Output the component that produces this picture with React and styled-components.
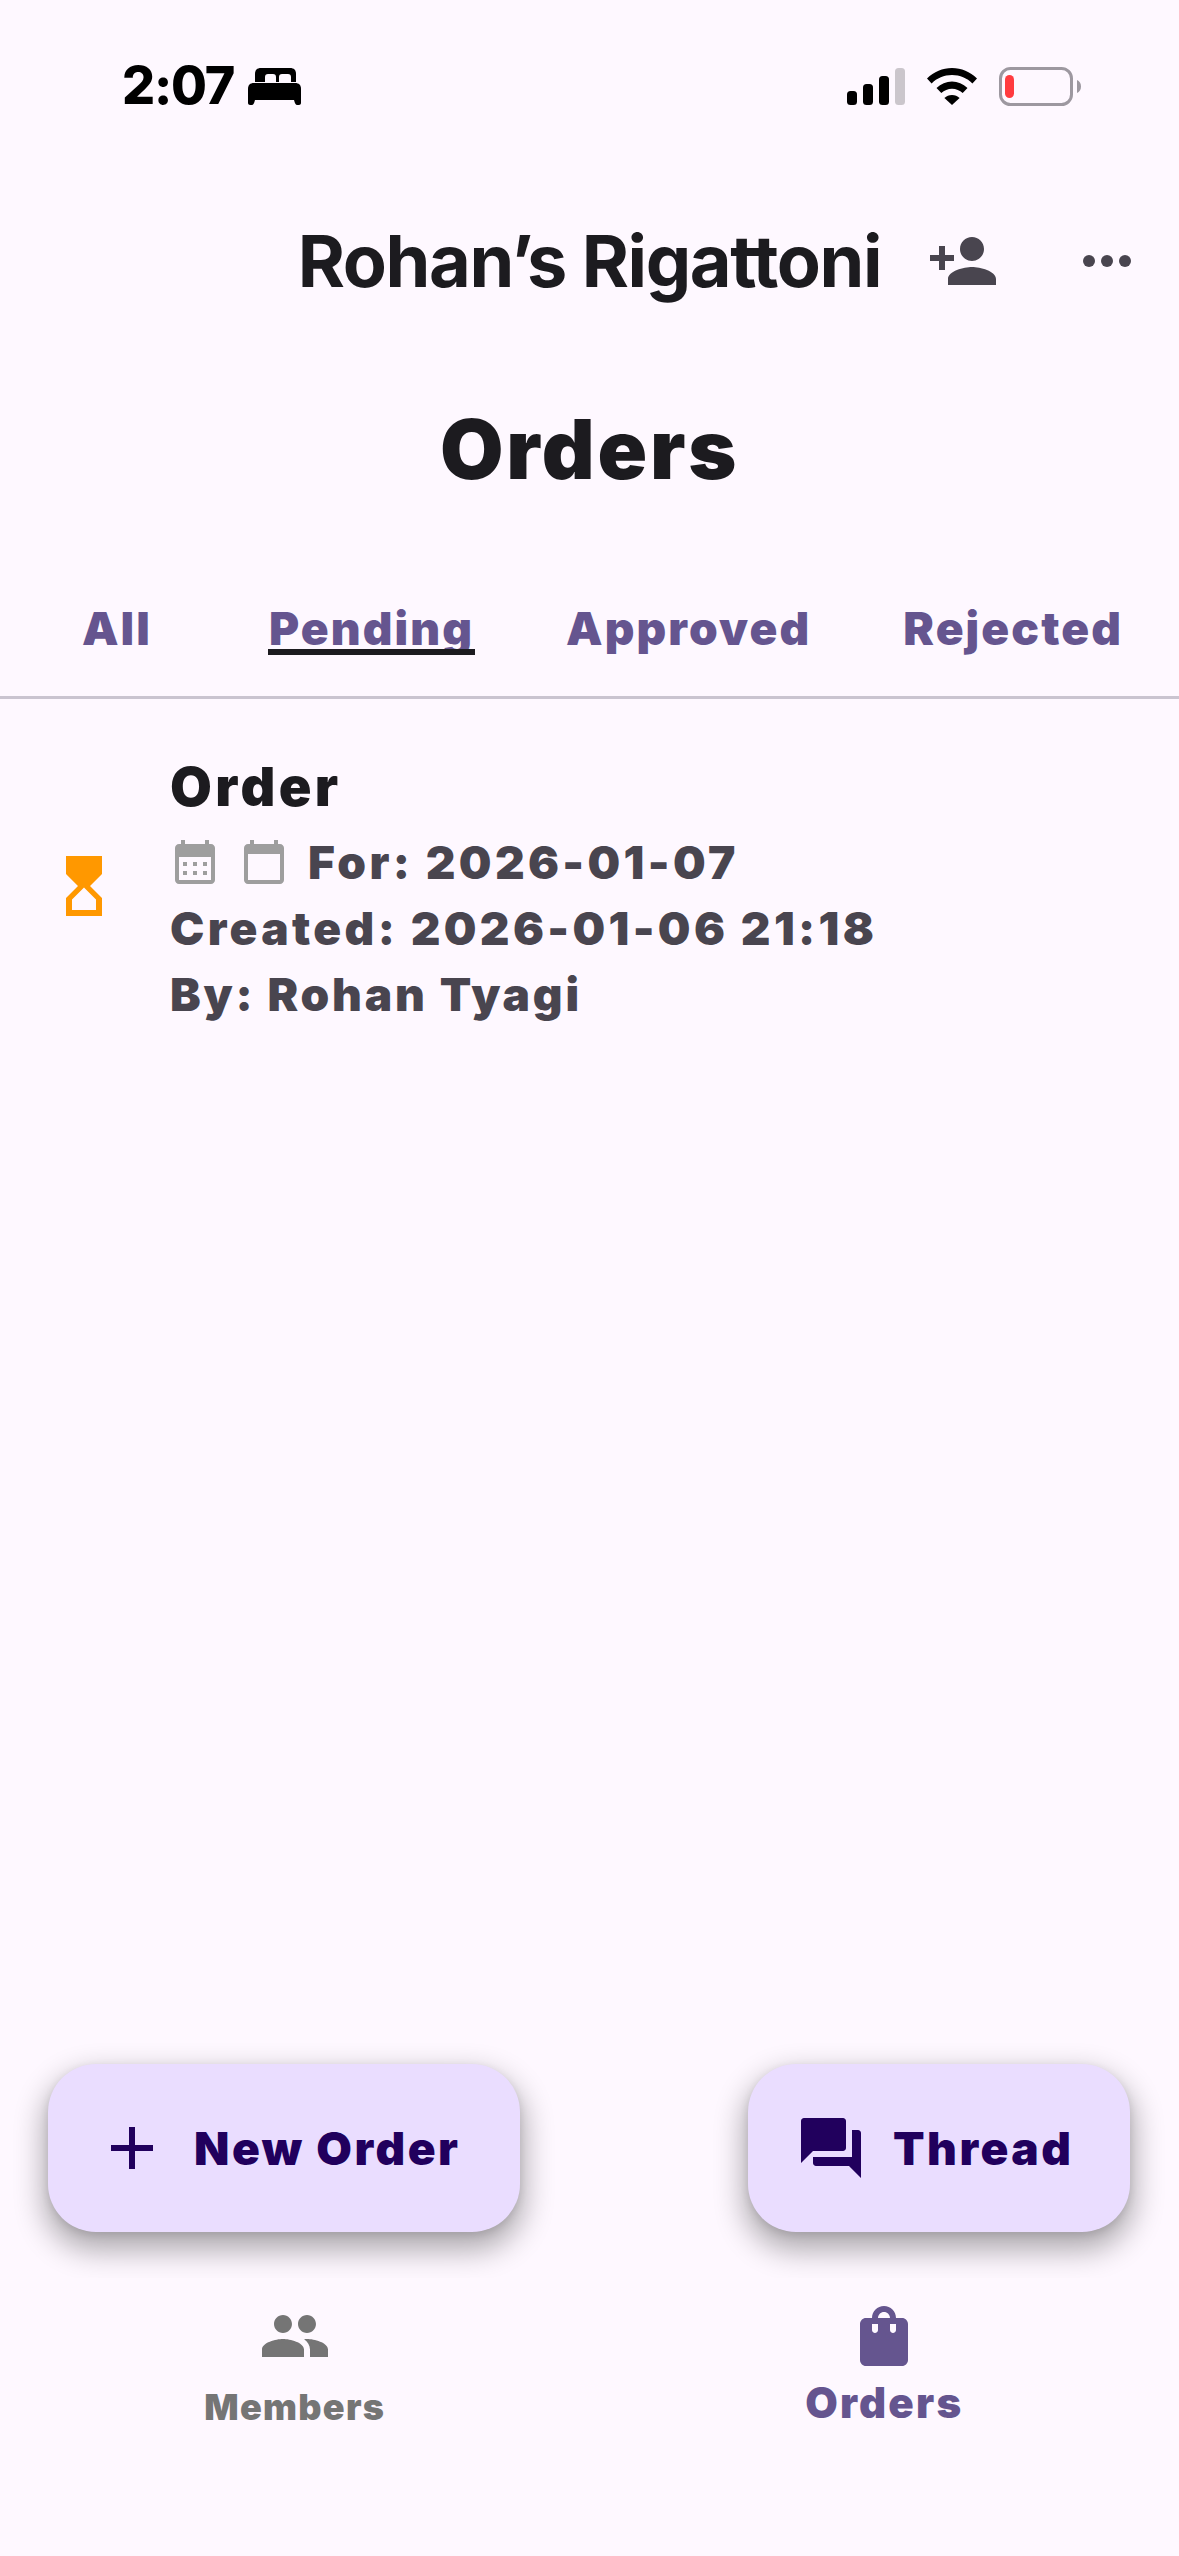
import React from 'react';
import styled, { createGlobalStyle } from 'styled-components';

const GlobalStyle = createGlobalStyle`
  html, body {
    margin: 0;
    padding: 0;
    background: #fef8ff;
    font-family: Inter, "Noto Sans", sans-serif;
  }
`;

const Page = styled.div`
  width: 1179px;
  height: 2556px;
  overflow: hidden;
  display: flex;
  flex-direction: column;
  background: #fef8ff;
  color: #1c1b1f;
`;

const StatusBar = styled.div`
  height: 225px;
  box-sizing: border-box;
  padding: 56px 98px 0 122px;
  display: flex;
  justify-content: space-between;
  align-items: flex-start;
`;
const StatusLeft = styled.div`
  display: flex;
  align-items: center;
  gap: 14px;
`;
const Clock = styled.span`
  font-size: 52px;
  line-height: 60px;
  font-weight: 800;
  color: #000;
  letter-spacing: -1.2px;
`;
const StatusRight = styled.div`
  display: flex;
  align-items: center;
  gap: 22px;
  margin-top: 11px;
`;

const AppBar = styled.header`
  height: 72px;
  display: grid;
  grid-template-columns: 1fr auto 1fr;
  align-items: center;
`;
const AppTitle = styled.h1`
  grid-column: 2;
  margin: 0;
  font-size: 72px;
  line-height: 72px;
  font-weight: 700;
  letter-spacing: -1.4px;
  white-space: nowrap;
`;
const AppActions = styled.div`
  grid-column: 3;
  padding-right: 36px;
  display: flex;
  justify-content: flex-end;
  gap: 72px;
`;

const Heading = styled.h2`
  margin: 105px 0 0;
  text-align: center;
  font-size: 82px;
  line-height: 96px;
  font-weight: 900;
  letter-spacing: 2.7px;
`;

const Tabs = styled.nav`
  height: 201px;
  box-sizing: border-box;
  padding: 100px 0 0 11px;
  display: flex;
  align-items: flex-start;
  border-bottom: 3px solid #cac4d0;
`;
const Tab = styled.div`
  box-sizing: border-box;
  min-width: ${p => p.$minWidth || 0}px;
  padding: 0 46px;
  text-align: center;
  font-size: 46px;
  line-height: 60px;
  font-weight: 900;
  letter-spacing: 2.1px;
  color: #65558f;
  white-space: nowrap;
`;
const ActiveLabel = styled.span`
  position: relative;
  display: inline-block;
  &::after {
    content: '';
    position: absolute;
    left: -1px;
    right: -1px;
    bottom: 3px;
    height: 6px;
    background: #1c1b1f;
  }
`;

const OrderList = styled.main`
  flex: 1;
  min-height: 0;
`;
const OrderRow = styled.div`
  padding: 55px 48px 0;
  display: flex;
  align-items: center;
  gap: 50px;
`;
const StatusIcon = styled.span`
  margin-bottom: 10px;
`;
const OrderBody = styled.div`
  display: flex;
  flex-direction: column;
`;
const OrderName = styled.div`
  font-size: 54px;
  line-height: 66px;
  margin-bottom: 9px;
  font-weight: 900;
  letter-spacing: 3.4px;
`;
const OrderLine = styled.div`
  display: flex;
  align-items: center;
  font-size: 46px;
  line-height: 66px;
  font-weight: 900;
  letter-spacing: ${p => p.$spacing || 3.35}px;
  color: #49454f;
  white-space: nowrap;
`;
const CalendarGroup = styled.span`
  display: flex;
  gap: 21px;
  margin: 0 20px 0 1px;
`;

const FabRow = styled.div`
  padding: 0 49px 46px 48px;
  display: flex;
  justify-content: space-between;
`;
const Fab = styled.button`
  height: 168px;
  width: ${p => p.$width}px;
  box-sizing: border-box;
  padding: 0 0 0 ${p => p.$inset}px;
  border: 0;
  border-radius: 48px;
  background: #eaddff;
  color: #21005d;
  box-shadow: 0 14px 30px 4px rgba(0, 0, 0, 0.32), 0 3px 9px rgba(0, 0, 0, 0.1);
  display: flex;
  align-items: center;
  gap: ${p => p.$gap}px;
  font-family: inherit;
  font-size: 46px;
  font-weight: 900;
  letter-spacing: 2.5px;
  white-space: nowrap;
`;

const BottomNav = styled.nav`
  height: 278px;
  box-sizing: border-box;
  background: #fef8ff;
  display: grid;
  grid-template-columns: 1fr 1fr;
`;
const NavItem = styled.div`
  display: flex;
  flex-direction: column;
  align-items: center;
  padding-top: 22px;
  color: ${p => (p.$active ? '#65558f' : '#757575')};
`;
const NavLabel = styled.span`
  font-size: ${p => (p.$active ? 42 : 36)}px;
  line-height: 48px;
  font-weight: 900;
  letter-spacing: ${p => (p.$active ? 2.2 : 1.3)}px;
  margin-top: ${p => (p.$active ? 7 : 11)}px;
`;

const Icon = ({ d, size = 72, color = 'currentColor' }) => (
  <svg width={size} height={size} viewBox="0 0 24 24" fill={color} style={{ display: 'block', flex: 'none' }}>
    <path d={d} />
  </svg>
);

const PATHS = {
  personAdd:
    'M15 12c2.21 0 4-1.79 4-4s-1.79-4-4-4-4 1.79-4 4 1.79 4 4 4zm-9-2V7H4v3H1v2h3v3h2v-3h3v-2H6zm9 4c-2.67 0-8 1.34-8 4v2h16v-2c0-2.66-5.33-4-8-4z',
  hourglass:
    'M6 2v6h.01L6 8.01 10 12l-4 4 .01.01H6V22h12v-5.99h-.01L18 16l-4-4 4-3.99-.01-.01H18V2H6zm10 14.5V20H8v-3.5l4-4 4 4z',
  calendarToday:
    'M20 3h-1V1h-2v2H7V1H5v2H4c-1.1 0-2 .9-2 2v16c0 1.1.9 2 2 2h16c1.1 0 2-.9 2-2V5c0-1.1-.9-2-2-2zm0 18H4V8h16v13z',
  calendarDots:
    'M20 3h-1V1h-2v2H7V1H5v2H4c-1.1 0-2 .9-2 2v16c0 1.1.9 2 2 2h16c1.1 0 2-.9 2-2V5c0-1.1-.9-2-2-2zm0 18H4V9.500h16V21zM6 12h2v2H6zm5 0h2v2h-2zm5 0h2v2h-2zM6 16.500h2v2H6zm5 0h2v2h-2zm5 0h2v2h-2z',
  add: 'M19 13h-6v6h-2v-6H5v-2h6V5h2v6h6v2z',
  forum:
    'M21 6h-2v9H6v2c0 .55.45 1 1 1h11l4 4V7c0-.55-.45-1-1-1zm-4 6V3c0-.55-.45-1-1-1H3c-.55 0-1 .45-1 1v14l4-4h10c.55 0 1-.45 1-1z',
  people:
    'M16 11c1.66 0 2.99-1.34 2.99-3S17.66 5 16 5c-1.66 0-3 1.34-3 3s1.34 3 3 3zm-8 0c1.66 0 2.99-1.34 2.99-3S9.66 5 8 5C6.34 5 5 6.34 5 8s1.34 3 3 3zm0 2c-2.33 0-7 1.17-7 3.5V19h14v-2.5c0-2.33-4.67-3.5-7-3.5zm8 0c-.29 0-.62.02-.97.05 1.16.84 1.97 1.97 1.97 3.45V19h6v-2.5c0-2.33-4.67-3.5-7-3.5z',
  bag:
    'M18 6h-2c0-2.21-1.79-4-4-4S8 3.79 8 6H6c-1.1 0-2 .9-2 2v12c0 1.1.9 2 2 2h12c1.1 0 2-.9 2-2V8c0-1.1-.9-2-2-2zm-8 4c0 .55-.45 1-1 1s-1-.45-1-1V8h2v2zm2-6c1.1 0 2 .9 2 2h-4c0-1.1.9-2 2-2zm4 6c0 .55-.45 1-1 1s-1-.45-1-1V8h2v2z',
};

const MoreIcon = () => (
  <svg width="72" height="72" viewBox="0 0 24 24" fill="#49454f" style={{ display: 'block' }}>
    <circle cx="6" cy="12" r="2" />
    <circle cx="12" cy="12" r="2" />
    <circle cx="18" cy="12" r="2" />
  </svg>
);

const BedIcon = () => (
  <svg width="53" height="37" viewBox="0 0 53 37" fill="#000" style={{ display: 'block' }}>
    <path d="M7 14V6c0-4 2-6 6-6h29c4 0 6 2 6 6v8h-5V9c0-2-1-3-3-3h-6c-2 0-3 1-3 3v5h-3V9c0-2-1-3-3-3h-5c-2 0-3 1-3 3v5z" />
    <path d="M6 15h41c4 0 6 2 6 6v14c0 1-1 2-2 2h-2c-1 0-2-1-3-5H7c-1 4-2 5-3 5H2c-1 0-2-1-2-2V21c0-4 2-6 6-6z" />
  </svg>
);

const SignalIcon = () => (
  <svg width="58" height="37" viewBox="0 0 58 37" style={{ display: 'block' }}>
    <rect x="0" y="23" width="10" height="14" rx="3.5" fill="#000" />
    <rect x="16" y="16" width="10" height="21" rx="3.5" fill="#000" />
    <rect x="32" y="8" width="10" height="29" rx="3.5" fill="#000" />
    <rect x="48" y="0" width="10" height="37" rx="3.5" fill="#cbc6cc" />
  </svg>
);

const WifiIcon = () => (
  <svg width="50" height="37" viewBox="0 0 50 37" fill="#000" style={{ display: 'block' }}>
    <path d="M25 0c9.5 0 18 3.6 25 10.5l-4.6 5C40 10 33 7 25 7S10 10 4.6 15.500L0 10.500C7 3.600 15.500 0 25 0z" />
    <path d="M25 13.500c5.800 0 11 2.200 15.500 6.500l-4.800 5C32.800 22.300 29 20.700 25 20.700s-7.800 1.600-10.700 4.300l-4.800-5C14 15.700 19.200 13.500 25 13.500z" />
    <path d="M25 27c3 0 5.500 1 7.600 3L25 37l-7.600-7c2.100-2 4.600-3 7.600-3z" />
  </svg>
);

const BatteryIcon = () => (
  <svg width="82" height="39" viewBox="0 0 82 39" style={{ display: 'block' }}>
    <rect x="1.500" y="1.500" width="71" height="36" rx="10" fill="none" stroke="#9d98a0" strokeWidth="3" />
    <rect x="6" y="8" width="9" height="23" rx="4.500" fill="#ff3b3f" />
    <path d="M78 13c2.500 1 4 3.500 4 6.500s-1.500 5.500-4 6.500z" fill="#9d98a0" />
  </svg>
);

const tabs = [
  { label: 'All', minWidth: 212 },
  { label: 'Pending', active: true },
  { label: 'Approved' },
  { label: 'Rejected' },
];

export default function App() {
  return (
    <Page>
      <GlobalStyle />
      <StatusBar>
        <StatusLeft>
          <Clock>2:07</Clock>
          <BedIcon />
        </StatusLeft>
        <StatusRight>
          <SignalIcon />
          <WifiIcon />
          <BatteryIcon />
        </StatusRight>
      </StatusBar>

      <AppBar>
        <AppTitle>Rohan’s Rigattoni</AppTitle>
        <AppActions>
          <Icon d={PATHS.personAdd} color="#49454f" />
          <MoreIcon />
        </AppActions>
      </AppBar>

      <Heading>Orders</Heading>

      <Tabs>
        {tabs.map(t => (
          <Tab key={t.label} $minWidth={t.minWidth}>
            {t.active ? <ActiveLabel>{t.label}</ActiveLabel> : t.label}
          </Tab>
        ))}
      </Tabs>

      <OrderList>
        <OrderRow>
          <StatusIcon>
            <Icon d={PATHS.hourglass} color="#ff9800" />
          </StatusIcon>
          <OrderBody>
            <OrderName>Order</OrderName>
            <OrderLine>
              <CalendarGroup>
                <Icon d={PATHS.calendarDots} size={48} color="#9e9e9e" />
                <Icon d={PATHS.calendarToday} size={48} color="#9e9e9e" />
              </CalendarGroup>
              For: 2026-01-07
            </OrderLine>
            <OrderLine>Created: 2026-01-06 21:18</OrderLine>
            <OrderLine $spacing={2.8}>By: Rohan Tyagi</OrderLine>
          </OrderBody>
        </OrderRow>
      </OrderList>

      <FabRow>
        <Fab $width={472} $inset={48} $gap={26}>
          <Icon d={PATHS.add} />
          New Order
        </Fab>
        <Fab $width={382} $inset={47} $gap={26}>
          <Icon d={PATHS.forum} />
          Thread
        </Fab>
      </FabRow>

      <BottomNav>
        <NavItem>
          <Icon d={PATHS.people} />
          <NavLabel>Members</NavLabel>
        </NavItem>
        <NavItem $active>
          <Icon d={PATHS.bag} />
          <NavLabel $active>Orders</NavLabel>
        </NavItem>
      </BottomNav>
    </Page>
  );
}
